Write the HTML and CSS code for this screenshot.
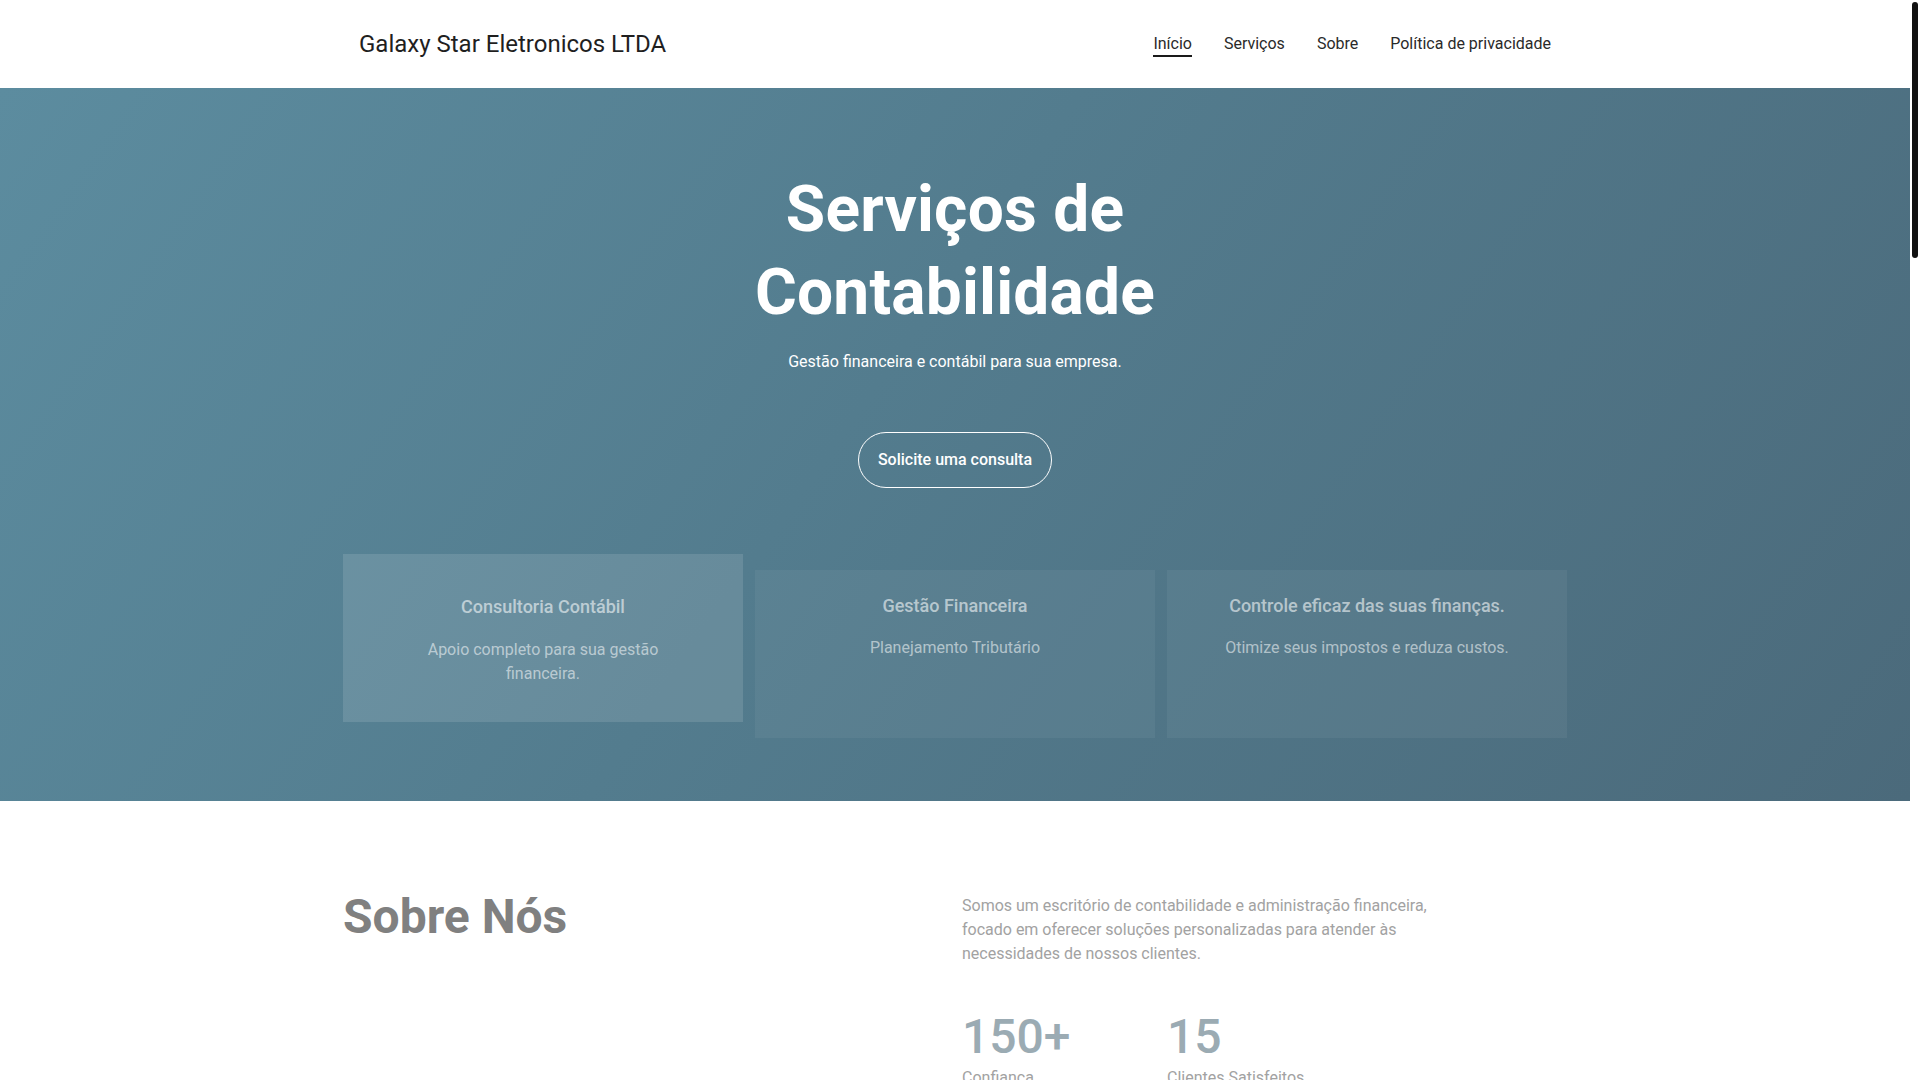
FILE: index.html
```html
<!DOCTYPE html>
<html lang="pt-BR">
<head>
<meta charset="utf-8">
<title>Galaxy Star Eletronicos LTDA</title>
<link rel="stylesheet" href="styles.css">
</head>
<body>
<div class="page">
  <header class="site-header">
    <div class="header-inner">
      <a class="logo" href="#">Galaxy Star Eletronicos LTDA</a>
      <nav class="nav">
        <a class="nav-link active" href="#">Início</a>
        <a class="nav-link" href="#">Serviços</a>
        <a class="nav-link" href="#">Sobre</a>
        <a class="nav-link" href="#">Política de privacidade</a>
      </nav>
    </div>
  </header>

  <section class="hero">
    <h1 class="hero-title">Serviços de<br>Contabilidade</h1>
    <p class="hero-sub">Gestão financeira e contábil para sua empresa.</p>
    <a class="btn" href="#">Solicite uma consulta</a>
    <div class="cards">
      <div class="card card-active">
        <h3 class="card-title">Consultoria Contábil</h3>
        <p class="card-text narrow">Apoio completo para sua gestão financeira.</p>
      </div>
      <div class="card">
        <h3 class="card-title">Gestão Financeira</h3>
        <p class="card-text">Planejamento Tributário</p>
      </div>
      <div class="card">
        <h3 class="card-title">Controle eficaz das suas finanças.</h3>
        <p class="card-text">Otimize seus impostos e reduza custos.</p>
      </div>
    </div>
  </section>

  <section class="about">
    <div class="about-inner">
      <h2 class="about-title">Sobre Nós</h2>
      <div class="about-body">
        <p class="about-text">Somos um escritório de contabilidade e administração financeira, focado em oferecer soluções personalizadas para atender às necessidades de nossos clientes.</p>
        <div class="stats">
          <div class="stat">
            <div class="stat-num">150+</div>
            <div class="stat-label">Confiança</div>
          </div>
          <div class="stat">
            <div class="stat-num">15</div>
            <div class="stat-label">Clientes Satisfeitos</div>
          </div>
        </div>
      </div>
    </div>
  </section>
</div>

<div class="scrollbar" aria-hidden="true">
  <div class="scrollbar-thumb"></div>
</div>
</body>
</html>
```

FILE: styles.css
```css
html {
  background: #ffffff;
}

body {
  margin: 0;
  font-family: Roboto, "Noto Sans", "Liberation Sans", sans-serif;
  color: #222222;
  background: #ffffff;
}

a {
  text-decoration: none;
  color: inherit;
}

.page {
  margin-right: 10px;
}

.scrollbar {
  position: fixed;
  top: 0;
  right: 0;
  width: 10px;
  height: 100vh;
  background: #ffffff;
  padding: 2px;
  box-sizing: border-box;
}

.scrollbar-thumb {
  width: 6px;
  height: 256px;
  background: #111111;
  border-radius: 3px;
}

.site-header {
  height: 88px;
  background: #ffffff;
}

.header-inner {
  width: 1224px;
  height: 88px;
  margin: 0 auto;
  padding: 0 16px;
  box-sizing: border-box;
  display: flex;
  align-items: center;
  justify-content: space-between;
}

.logo {
  font-size: 24px;
  line-height: 28px;
  color: #1f1f1f;
}

.nav {
  display: flex;
  gap: 32px;
  padding-top: 2px;
}

.nav-link {
  font-size: 16px;
  line-height: 19px;
  color: #2a2a2a;
  padding-bottom: 2px;
  border-bottom: 2px solid transparent;
}

.nav-link.active {
  border-bottom-color: #1a1a1a;
}

.hero {
  height: 713px;
  box-sizing: border-box;
  padding-top: 80px;
  background: linear-gradient(125deg, #5c8c9f 0%, #537c8e 45%, #4b6a7b 100%);
  display: flex;
  flex-direction: column;
  align-items: center;
  color: #ffffff;
}

.hero-title {
  margin: 0;
  font-size: 64px;
  line-height: 83px;
  font-weight: 700;
  text-align: center;
  letter-spacing: 0.2px;
}

.hero-sub {
  margin: 16px 0 0;
  font-size: 16px;
  line-height: 24px;
  text-align: center;
}

.btn {
  margin-top: 58px;
  padding: 17px 19px 18px;
  border: 1px solid #ffffff;
  border-radius: 28px;
  font-size: 16px;
  line-height: 19px;
  font-weight: 500;
  color: #ffffff;
}

.cards {
  margin-top: 82px;
  display: grid;
  grid-template-columns: repeat(3, 400px);
  gap: 12px;
  align-items: start;
}

.card {
  min-height: 168px;
  box-sizing: border-box;
  padding: 24px 24px 24px;
  background: rgba(255, 255, 255, 0.05);
  text-align: center;
}

.card-active {
  margin-top: -16px;
  padding-top: 41px;
  background: rgba(255, 255, 255, 0.12);
}

.card-title {
  margin: 0;
  font-size: 18px;
  line-height: 24px;
  font-weight: 500;
  color: rgba(255, 255, 255, 0.58);
}

.card-text {
  margin: 18px auto 0;
  font-size: 16px;
  line-height: 24px;
  color: rgba(255, 255, 255, 0.55);
}

.card-active .card-text {
  margin-top: 19px;
}

.card-text.narrow {
  max-width: 250px;
}

.about {
  padding-top: 87px;
  padding-bottom: 80px;
}

.about-inner {
  width: 1224px;
  margin: 0 auto;
  display: grid;
  grid-template-columns: 607px 1fr;
  gap: 12px;
}

.about-title {
  margin: 0;
  font-size: 48px;
  line-height: 1.2;
  font-weight: 700;
  color: #808080;
}

.about-body {
  padding-top: 6px;
}

.about-text {
  margin: 0;
  max-width: 490px;
  font-size: 16px;
  line-height: 24px;
  color: #a2a2a2;
}

.stats {
  margin-top: 42px;
  display: flex;
}

.stat {
  width: 205px;
}

.stat-num {
  font-size: 48px;
  line-height: 1.2;
  font-weight: 500;
  color: #9babb3;
}

.stat-label {
  font-size: 16px;
  line-height: 24px;
  color: #a2a2a2;
}
```
